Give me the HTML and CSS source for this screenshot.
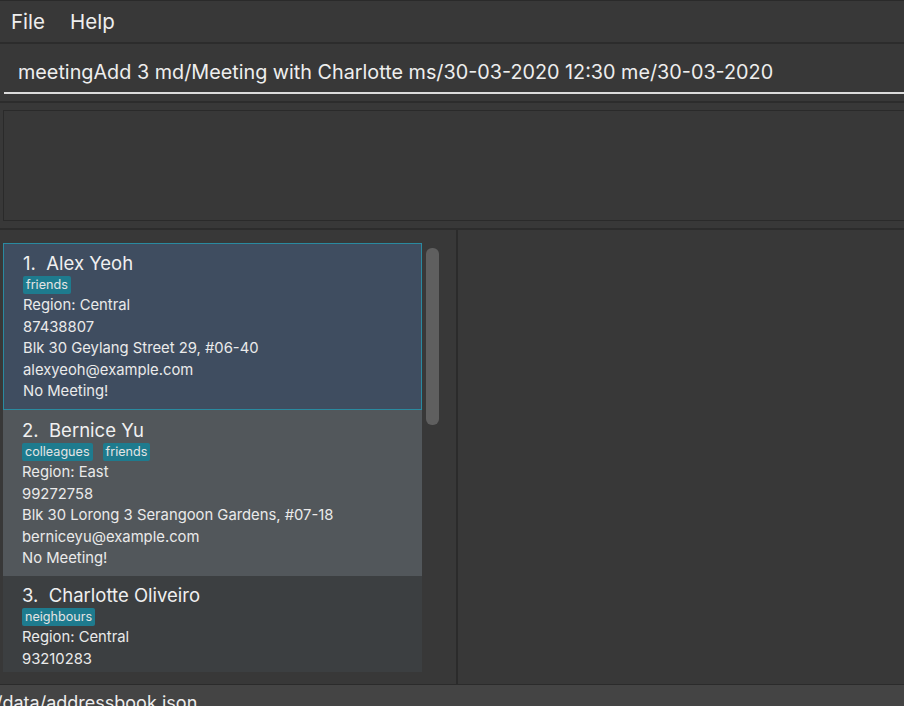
FILE: index.html
```html
<!DOCTYPE html>
<html>
<head>
<meta charset="utf-8">
<link rel="stylesheet" href="styles.css">
</head>
<body>
<div class="app">
  <div class="menubar">
    <span class="menu-item">File</span>
    <span class="menu-item">Help</span>
  </div>
  <div class="command">
    <div class="command-input">meetingAdd 3 md/Meeting with Charlotte ms/30-03-2020 12:30 me/30-03-2020</div>
  </div>
  <div class="result">
    <div class="result-box"></div>
  </div>
  <div class="main">
    <div class="list-panel">
      <div class="list">
        <div class="card selected">
          <div class="name">1.&nbsp; Alex Yeoh</div>
          <div class="tags"><span class="tag">friends</span></div>
          <div class="line">Region: Central</div>
          <div class="line">87438807</div>
          <div class="line">Blk 30 Geylang Street 29, #06-40</div>
          <div class="line">alexyeoh@example.com</div>
          <div class="line">No Meeting!</div>
        </div>
        <div class="card even">
          <div class="name">2.&nbsp; Bernice Yu</div>
          <div class="tags"><span class="tag">colleagues</span><span class="tag">friends</span></div>
          <div class="line">Region: East</div>
          <div class="line">99272758</div>
          <div class="line">Blk 30 Lorong 3 Serangoon Gardens, #07-18</div>
          <div class="line">berniceyu@example.com</div>
          <div class="line">No Meeting!</div>
        </div>
        <div class="card odd">
          <div class="name">3.&nbsp; Charlotte Oliveiro</div>
          <div class="tags"><span class="tag">neighbours</span></div>
          <div class="line">Region: Central</div>
          <div class="line">93210283</div>
        </div>
      </div>
      <div class="scrollbar"><div class="thumb"></div></div>
    </div>
    <div class="detail-panel"></div>
  </div>
  <div class="status">/data/addressbook.json</div>
</div>
</body>
</html>
```

FILE: styles.css
```css
html, body {
  margin: 0;
  padding: 0;
  background: #383838;
}
body {
  font-family: Inter, "Open Sans", "Liberation Sans", sans-serif;
  color: #ffffff;
}
.app {
  width: 904px;
  height: 706px;
  overflow: hidden;
  display: flex;
  flex-direction: column;
  background: #383838;
}
.menubar {
  height: 41px;
  border-top: 1px solid #2a2a2a;
  border-bottom: 2px solid #2c2c2c;
  display: flex;
  align-items: center;
  box-sizing: content-box;
  padding-left: 11px;
  gap: 25px;
  flex-shrink: 0;
}
.menu-item {
  font-size: 20.5px;
  color: #eeeeee;
}
.command {
  height: 57px;
  flex-shrink: 0;
  padding-left: 4px;
  border-bottom: 2px solid #2c2c2c;
  box-sizing: content-box;
}
.command-input {
  border-bottom: 2px solid #dcdcdc;
  padding-left: 14px;
  padding-top: 8px;
  box-sizing: border-box;
  height: 50px;
  font-size: 19.8px;
  color: #eeeeee;
  display: flex;
  align-items: center;
  white-space: nowrap;
}
.result {
  flex-shrink: 0;
  padding: 7px 0 0 3px;
  border-bottom: 2px solid #2c2c2c;
  box-sizing: border-box;
  height: 127px;
}
.result-box {
  border: 1px solid #2a2a2a;
  border-right: none;
  background: #383838;
  box-sizing: border-box;
  height: 111px;
}
.main {
  flex: 1;
  display: flex;
  min-height: 0;
}
.list-panel {
  width: 453px;
  border-right: 2px solid #2b2b2b;
  display: flex;
  padding: 13px 0 0 3px;
  box-sizing: content-box;
  overflow: hidden;
}
.list {
  width: 419px;
  height: 429px;
  overflow: hidden;
  background: #3a3c3d;
}
.card {
  padding: 8px 0 0 19px;
  box-sizing: border-box;
}
.card.selected {
  background: #3f4d60;
  border: 1px solid #2a8aa0;
  padding: 7px 0 0 19px;
  height: 167px;
}
.card.even {
  background: #52575b;
  height: 166px;
  padding-top: 8px;
}
.card.odd {
  background: #3c3f41;
  height: 96px;
  padding-top: 7px;
}
.name {
  font-size: 18.5px;
  line-height: 24px;
  color: #f0f0f0;
}
.tags {
  display: flex;
  gap: 10px;
  margin-top: 1px;
  height: 20px;
  align-items: flex-start;
}
.tag {
  background: #1e7b8e;
  color: #e4e4e4;
  font-size: 12.6px;
  line-height: 18px;
  height: 18px;
  padding: 0 3px;
  border-radius: 2px;
}
.line {
  font-size: 14.8px;
  line-height: 21.5px;
  color: #eaeaea;
}
.tags + .line {
  margin-top: -1px;
}
.scrollbar {
  width: 13px;
  margin-left: 4px;
  padding-top: 5px;
}
.thumb {
  width: 13px;
  height: 177px;
  background: #5f5f5f;
  border-radius: 6px;
}
.detail-panel {
  flex: 1;
  background: #383838;
}
.status {
  height: 21px;
  flex-shrink: 0;
  border-top: 1px solid #2b2b2b;
  background: #444444;
  font-size: 18px;
  line-height: 36px;
  color: #eeeeee;
  margin-left: -4px;
  overflow: hidden;
  white-space: nowrap;
}
```
